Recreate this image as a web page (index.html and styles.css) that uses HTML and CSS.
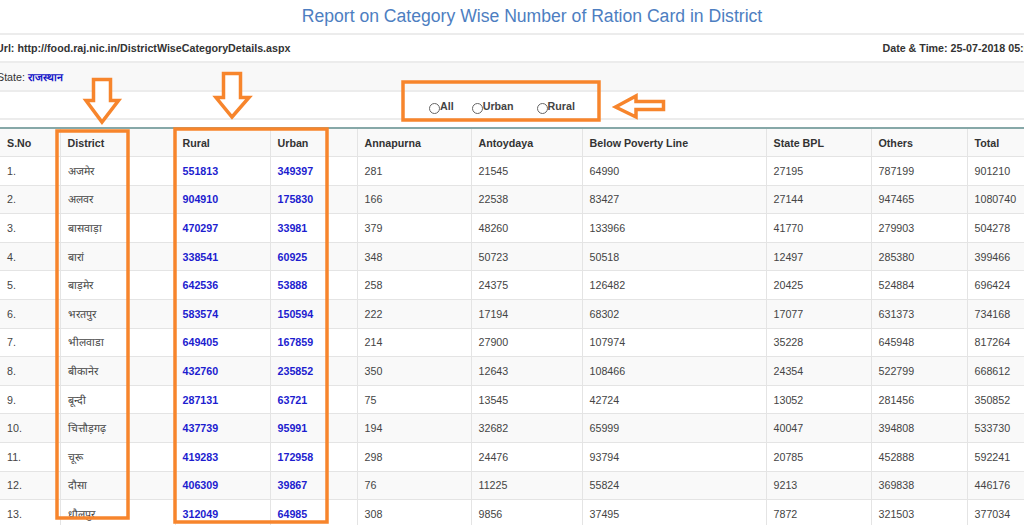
FILE: index.html
```html
<!DOCTYPE html>
<html>
<head>
<meta charset="utf-8">
<link rel="stylesheet" href="styles.css">
</head>
<body>
<div class="page">
  <div class="top">
    <div class="title">Report on Category Wise Number of Ration Card in District</div>
    <div class="row url-row">
      <span class="bold">Url: http://food.raj.nic.in/DistrictWiseCategoryDetails.aspx</span>
      <span class="bold">Date &amp; Time: 25-07-2018 05:02:33 PM</span>
    </div>
    <div class="row state-row">
      <span>State: <b class="state">राजस्थान</b></span>
    </div>
    <div class="row radio-row">
      <label class="opt opt-all"><span class="circle"></span>All</label>
      <label class="opt opt-urban"><span class="circle"></span>Urban</label>
      <label class="opt"><span class="circle"></span>Rural</label>
    </div>
  </div>
  <table class="grid">
    <colgroup>
      <col class="c-sno"><col class="c-dist"><col class="c-rural"><col class="c-urban"><col class="c-ann"><col class="c-ant"><col class="c-bpl"><col class="c-sbpl"><col class="c-oth"><col class="c-tot">
    </colgroup>
    <tr class="head"><th>S.No</th><th>District</th><th>Rural</th><th>Urban</th><th>Annapurna</th><th>Antoydaya</th><th>Below Poverty Line</th><th>State BPL</th><th>Others</th><th>Total</th></tr>
    <tr><td>1.</td><td>अजमेर</td><td class="lnk">551813</td><td class="lnk">349397</td><td>281</td><td>21545</td><td>64990</td><td>27195</td><td>787199</td><td>901210</td></tr>
    <tr><td>2.</td><td>अलवर</td><td class="lnk">904910</td><td class="lnk">175830</td><td>166</td><td>22538</td><td>83427</td><td>27144</td><td>947465</td><td>1080740</td></tr>
    <tr><td>3.</td><td>बासवाड़ा</td><td class="lnk">470297</td><td class="lnk">33981</td><td>379</td><td>48260</td><td>133966</td><td>41770</td><td>279903</td><td>504278</td></tr>
    <tr><td>4.</td><td>बारां</td><td class="lnk">338541</td><td class="lnk">60925</td><td>348</td><td>50723</td><td>50518</td><td>12497</td><td>285380</td><td>399466</td></tr>
    <tr><td>5.</td><td>बाड़मेर</td><td class="lnk">642536</td><td class="lnk">53888</td><td>258</td><td>24375</td><td>126482</td><td>20425</td><td>524884</td><td>696424</td></tr>
    <tr><td>6.</td><td>भरतपुर</td><td class="lnk">583574</td><td class="lnk">150594</td><td>222</td><td>17194</td><td>68302</td><td>17077</td><td>631373</td><td>734168</td></tr>
    <tr><td>7.</td><td>भीलवाडा</td><td class="lnk">649405</td><td class="lnk">167859</td><td>214</td><td>27900</td><td>107974</td><td>35228</td><td>645948</td><td>817264</td></tr>
    <tr><td>8.</td><td>बीकानेर</td><td class="lnk">432760</td><td class="lnk">235852</td><td>350</td><td>12643</td><td>108466</td><td>24354</td><td>522799</td><td>668612</td></tr>
    <tr><td>9.</td><td>बून्दी</td><td class="lnk">287131</td><td class="lnk">63721</td><td>75</td><td>13545</td><td>42724</td><td>13052</td><td>281456</td><td>350852</td></tr>
    <tr><td>10.</td><td>चित्तौड़गढ़</td><td class="lnk">437739</td><td class="lnk">95991</td><td>194</td><td>32682</td><td>65999</td><td>40047</td><td>394808</td><td>533730</td></tr>
    <tr><td>11.</td><td>चूरू</td><td class="lnk">419283</td><td class="lnk">172958</td><td>298</td><td>24476</td><td>93794</td><td>20785</td><td>452888</td><td>592241</td></tr>
    <tr><td>12.</td><td>दौसा</td><td class="lnk">406309</td><td class="lnk">39867</td><td>76</td><td>11225</td><td>55824</td><td>9213</td><td>369838</td><td>446176</td></tr>
    <tr><td>13.</td><td>धौलपुर</td><td class="lnk">312049</td><td class="lnk">64985</td><td>308</td><td>9856</td><td>37495</td><td>7872</td><td>321503</td><td>377034</td></tr>
    <tr><td>14.</td><td>डूंगरपुर</td><td class="lnk">263716</td><td class="lnk">24578</td><td>183</td><td>36524</td><td>89563</td><td>25896</td><td>136128</td><td>288294</td></tr>
  </table>
  <svg class="marks" width="1024" height="525" viewBox="0 0 1024 525">
    <g fill="none" stroke="#f7852c" stroke-width="3.5" stroke-linejoin="miter">
      <rect x="57" y="131" width="71" height="387"/>
      <rect x="175" y="129" width="152" height="393"/>
      <rect x="403" y="82" width="196" height="38"/>
    </g>
    <g fill="#ffffff" stroke="#f7852c" stroke-width="3.5" stroke-linejoin="miter">
      <path d="M93.5,79.5 H110.5 V100.5 H118.5 L102,122 L86,100.5 H93.5 Z"/>
      <path d="M223.5,73.5 H240.5 V97.5 H249 L232,117 L216,97.5 H223.5 Z"/>
      <path d="M615.5,107 L636,96 V101.5 H663.5 V109.5 H636 V117 Z"/>
    </g>
  </svg>
</div>
</body>
</html>
```

FILE: styles.css
```css
html, body {
  margin: 0;
  padding: 0;
  overflow: hidden;
  background: #ffffff;
}
body {
  width: 1024px;
  height: 525px;
  font-family: "Liberation Sans", Arial, sans-serif;
  color: #333333;
}
.page {
  position: relative;
  width: 1024px;
  height: 525px;
  overflow: hidden;
}
.top {
  margin-left: -8px;
  width: 1080px;
}
.title {
  height: 33px;
  line-height: 33px;
  text-align: center;
  font-size: 17.6px;
  color: #4d7ec1;
  border-bottom: 2px solid #ececec;
}
.row {
  display: flex;
  align-items: center;
  font-size: 10.7px;
  border-bottom: 2px solid #ececec;
}
.url-row {
  height: 26px;
  justify-content: space-between;
  padding-left: 4px;
  padding-right: 2px;
}
.bold {
  font-weight: bold;
  color: #333333;
}
.state-row {
  height: 27px;
  background: #f8f8f8;
  padding-left: 5px;
}
.state {
  color: #1515c8;
}
.radio-row {
  height: 26px;
  justify-content: center;
  padding-right: 60px;
  margin-bottom: 7px;
  font-weight: bold;
  color: #444444;
}
.opt {
  display: inline-flex;
  align-items: flex-start;
  line-height: 12px;
  margin-top: 3px;
}
.opt-all { margin-right: 18px; }
.opt-urban { margin-right: 23px; }
.circle {
  width: 9px;
  height: 9px;
  border: 1px solid #666666;
  border-radius: 50%;
  margin-top: 3px;
  box-sizing: content-box;
  background: #ffffff;
}
.grid {
  width: 1047px;
  table-layout: fixed;
  border-collapse: collapse;
  border-top: 2px solid #86a8a8;
  font-size: 10.7px;
}
.c-sno { width: 60px; }
.c-dist { width: 115px; }
.c-rural { width: 95px; }
.c-urban { width: 87px; }
.c-ann { width: 114px; }
.c-ant { width: 111px; }
.c-bpl { width: 184px; }
.c-sbpl { width: 105px; }
.c-oth { width: 96px; }
.c-tot { width: 80px; }
.grid tr {
  height: 28.6px;
}
.grid th, .grid td {
  border: 1px solid #e4e4e4;
  padding: 0 0 0 7px;
  text-align: left;
  white-space: nowrap;
}
.grid th {
  font-weight: bold;
  color: #333333;
}
.grid td {
  color: #444444;
}
.grid th:first-child, .grid td:first-child {
  border-left: none;
}
.grid tr:nth-child(odd) {
  background: #f9f9f9;
}
.grid td.lnk {
  color: #1d1dcf;
  font-weight: bold;
}
.marks {
  position: absolute;
  left: 0;
  top: 0;
}
```
